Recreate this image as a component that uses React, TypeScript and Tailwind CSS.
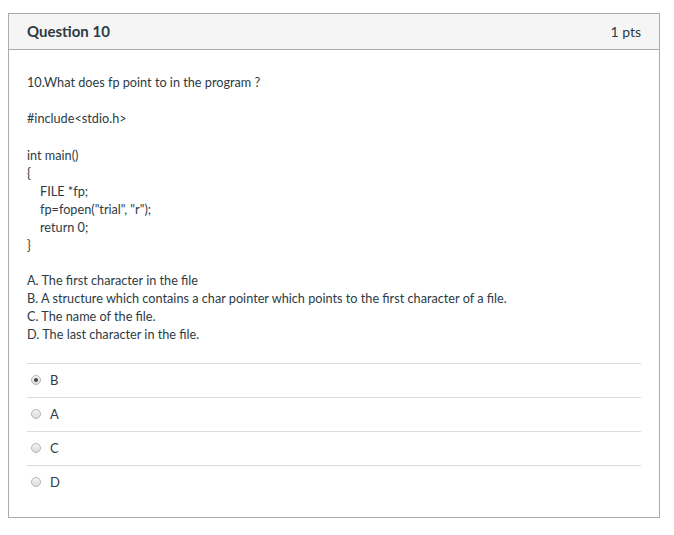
const codeLines = [
  { text: "int main()", indent: false },
  { text: "{", indent: false },
  { text: 'FILE *fp;', indent: true },
  { text: 'fp=fopen("trial", "r");', indent: true },
  { text: "return 0;", indent: true },
  { text: "}", indent: false },
]

const options = [
  "A. The first character in the file",
  "B. A structure which contains a char pointer which points to the first character of a file.",
  "C. The name of the file.",
  "D. The last character in the file.",
]

const answers = [
  { label: "B", selected: true },
  { label: "A", selected: false },
  { label: "C", selected: false },
  { label: "D", selected: false },
]

function Radio({ selected }: { selected: boolean }) {
  return (
    <span className="flex h-[10px] w-[10px] items-center justify-center rounded-full border border-[#b4b4b4] bg-gradient-to-b from-[#f4f4f4] to-[#dcdcdc]">
      {selected && <span className="h-[4px] w-[4px] rounded-full bg-[#444]" />}
    </span>
  )
}

export default function App() {
  return (
    <div className="min-h-screen bg-white pl-2 pt-[13px] font-['Lato','Open_Sans',sans-serif] text-[#2d3b45]">
      <div className="w-[652px] border border-[#ababab]">
        <div className="flex h-[36px] items-center justify-between border-b border-[#ababab] bg-[#f5f5f5] px-[18px]">
          <span className="text-[15px] font-bold">Question 10</span>
          <span className="text-[14px]">1 pts</span>
        </div>

        <div className="px-[18px] pb-[18px] pt-[23px] text-[12.7px] leading-[18px]">
          <p>10.What does fp point to in the program ?</p>
          <p className="mt-[18px]">#include&lt;stdio.h&gt;</p>
          <div className="mt-[19px]">
            {codeLines.map((line, i) => (
              <p key={i} className={line.indent ? "pl-[13px]" : ""}>
                {line.text}
              </p>
            ))}
          </div>
          <div className="mt-[17px]">
            {options.map((o) => (
              <p key={o}>{o}</p>
            ))}
          </div>

          <div className="mt-[20px]">
            {answers.map((a) => (
              <div key={a.label} className="flex h-[34px] items-center gap-[9px] border-t border-[#dcdcdc] pb-[2px] pl-[4px]">
                <Radio selected={a.selected} />
                <span className="text-[13px]">{a.label}</span>
              </div>
            ))}
          </div>
        </div>
      </div>
    </div>
  )
}
